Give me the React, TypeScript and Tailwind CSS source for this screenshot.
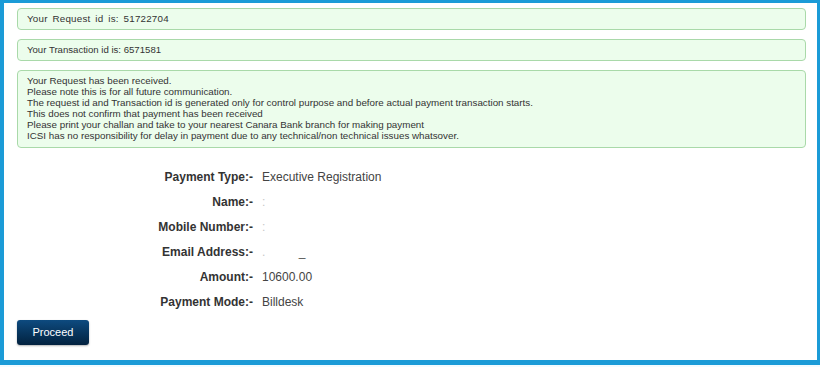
import React from 'react';

const rows: { label: string; value: React.ReactNode }[] = [
  { label: 'Payment Type:-', value: 'Executive Registration' },
  { label: 'Name:-', value: <span className="text-[#c8c8c8]">:</span> },
  { label: 'Mobile Number:-', value: <span className="text-[#c8c8c8]">:</span> },
  {
    label: 'Email Address:-',
    value: (
      <span className="text-[#c8c8c8]">
        . <span className="ml-[30px] text-[#555]">_</span>
      </span>
    ),
  },
  { label: 'Amount:-', value: '10600.00' },
  { label: 'Payment Mode:-', value: 'Billdesk' },
];

const notes = [
  'Your Request has been received.',
  'Please note this is for all future communication.',
  'The request id and Transaction id is generated only for control purpose and before actual payment transaction starts.',
  'This does not confirm that payment has been received',
  'Please print your challan and take to your nearest Canara Bank branch for making payment',
  'ICSI has no responsibility for delay in payment due to any technical/non technical issues whatsover.',
];

export default function App() {
  return (
    <div className="w-[820px] h-[367px] bg-[#f2fbff] font-['Liberation_Sans',Arial,sans-serif]">
      <div className="h-[365px] bg-white border-t-[3px] border-l-[4px] border-r-[3px] border-b-[5px] border-[#1b9bd7] pl-[13px] pr-[11px] pt-[5px]">
        <div className="flex flex-col gap-[9px]">
          {/* Request / transaction ids */}
          <div className="h-[22px] flex items-center px-[9px] bg-[#ecfdec] border border-[#a9d9a9] rounded-[4px] text-[9.8px] text-[#333] tracking-[0.2px] [word-spacing:2px]">
            Your Request id is: 51722704
          </div>
          <div className="h-[22px] flex items-center px-[9px] bg-[#ecfdec] border border-[#a9d9a9] rounded-[4px] text-[9.6px] text-[#333]">
            Your Transaction id is: 6571581
          </div>
          <div className="px-[9px] pt-[4px] pb-[6px] bg-[#ecfdec] border border-[#a9d9a9] rounded-[4px] text-[9.8px] leading-[11px] text-[#333]">
            {notes.map((n) => (
              <div key={n}>{n}</div>
            ))}
          </div>
        </div>

        {/* Details */}
        <div className="mt-[17px] grid grid-cols-[236px_1fr] gap-x-[9px] text-[12px] text-[#444]">
          {rows.map((r) => (
            <React.Fragment key={r.label}>
              <div className="h-[25px] leading-[25px] text-right font-bold text-[#333]">{r.label}</div>
              <div className="h-[25px] leading-[25px]">{r.value}</div>
            </React.Fragment>
          ))}
        </div>

        <button className="mt-[5px] w-[72px] h-[25px] rounded-[3px] bg-gradient-to-b from-[#0e4b80] to-[#03223f] text-white text-[11px] shadow-[0_1px_2px_rgba(0,0,0,0.3)]">
          Proceed
        </button>
      </div>
    </div>
  );
}
